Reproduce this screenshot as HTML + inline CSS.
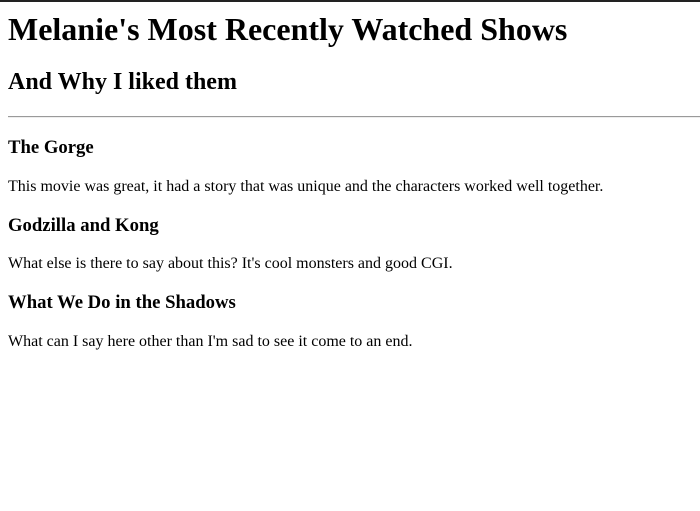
<!DOCTYPE html>
<html><head><style>
html,body{margin:0;padding:0;background:#fff;}
body{border-top:2px solid #222;padding:0 8px;font-family:"Liberation Serif","Times New Roman",Times,"DejaVu Serif",serif;color:#000;}
h1,h2,h3,p{font-family:"Liberation Serif","Times New Roman",Times,"DejaVu Serif",serif;}
h1{font-size:32px;margin:9px 0 21.44px;}
h2{font-size:24px;margin:19.92px 0;}
hr{margin:7px -8px 0 0;border:0;border-top:1px solid #9a9a9a;border-bottom:1px solid #eee;}
h3{font-size:18.72px;margin:18.72px 0;}
p{font-size:16px;margin:16px 0;}
</style></head><body>
<h1>Melanie's Most Recently Watched Shows</h1>
<h2>And Why I liked them</h2>
<hr>
<h3>The Gorge</h3>
<p>This movie was great, it had a story that was unique and the characters worked well together.</p>
<h3>Godzilla and Kong</h3>
<p>What else is there to say about this? It's cool monsters and good CGI.</p>
<h3>What We Do in the Shadows</h3>
<p>What can I say here other than I'm sad to see it come to an end.</p>
</body></html>
